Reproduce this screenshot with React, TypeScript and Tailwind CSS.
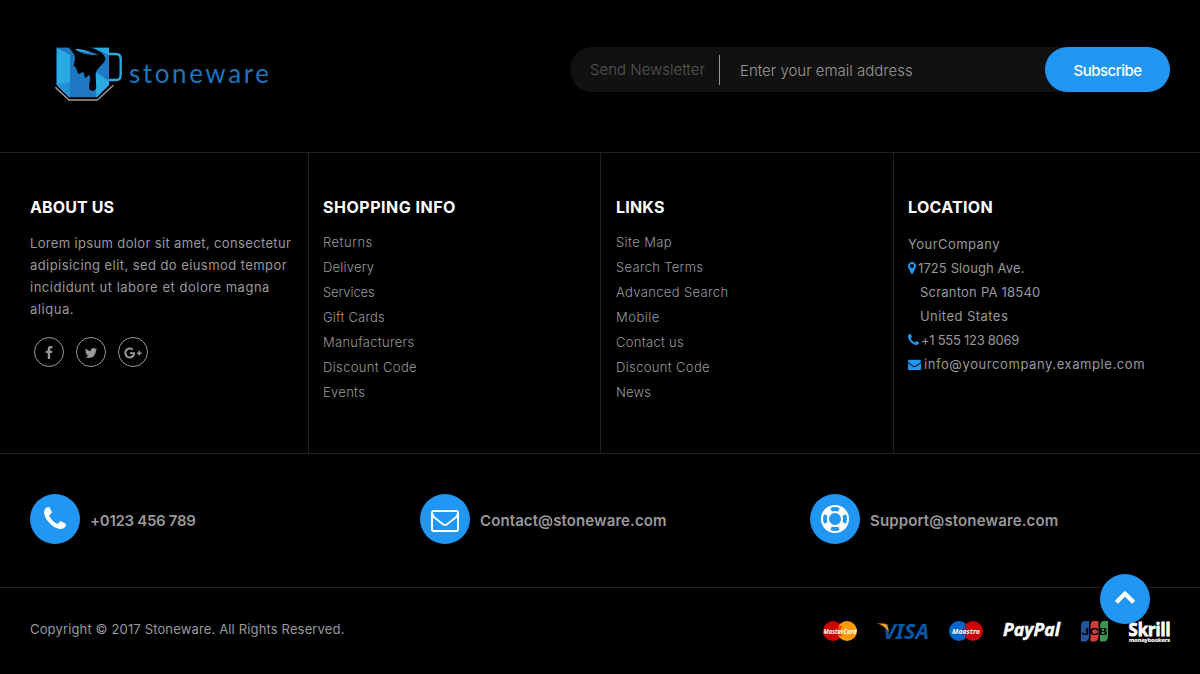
import React from "react";
import { FaGooglePlusG } from "react-icons/fa";

const PHONE =
  "M1600 1240q0 27-10 70.5t-21 68.5q-21 50-122 106-94 51-186 51-27 0-53-3.5t-57.5-12.5-47-14.5-55.5-20.5-49-18q-98-35-175-83-127-79-264-216t-216-264q-48-77-83-175-3-9-18-49t-20.5-55.5-14.5-47-12.5-57.5-3.5-53q0-92 51-186 56-101 106-122 25-11 68.5-21t70.5-10q14 0 21 3 18 6 53 76 11 19 30 54t35 63.5 31 53.5q3 4 17.5 25t21.5 35.5 7 28.5q0 20-28.5 50t-62 55-62 53-28.5 46q0 9 5 22.5t8.5 20.5 14 24 11.5 19q76 137 174 235t235 174q2 1 19 11.5t24 14 20.5 8.5 22.5 5q18 0 46-28.5t53-62 55-62 50-28.5q14 0 28.5 7t35.5 21.5 25 17.5q25 15 53.5 31t63.5 35 54 30q70 35 76 53 3 7 3 21z";
const ENVELOPE_O =
  "M1664 1504v-768q-32 36-69 66-268 206-426 338-51 43-83 67t-86.5 48.5-102.5 24.5h-2q-48 0-102.5-24.5t-86.5-48.5-83-67q-158-132-426-338-37-30-69-66v768q0 13 9.5 22.5t22.5 9.5h1472q13 0 22.5-9.5t9.5-22.5zm0-1051v-24.5l-.5-13-3-12.5-5.5-9-9-7.5-14-2.5h-1472q-13 0-22.5 9.5t-9.5 22.5q0 168 147 284 193 152 401 317 6 5 35 29.5t46 37.5 44.5 31.5 50.5 27.5 43 9h2q20 0 43-9t50.5-27.5 44.5-31.5 46-37.5 35-29.5q208-165 401-317 54-43 100.5-115.5t46.5-131.5zm128-37v1088q0 66-47 113t-113 47h-1472q-66 0-113-47t-47-113v-1088q0-66 47-113t113-47h1472q66 0 113 47t47 113z";
const ENVELOPE =
  "M1792 710v794q0 66-47 113t-113 47h-1472q-66 0-113-47t-47-113v-794q44 49 101 87 362 246 497 345 57 42 92.5 65.5t94.5 48 110 24.5h2q51 0 110-24.5t94.5-48 92.5-65.5q170-123 498-345 57-39 100-87zm0-294q0 79-49 151t-122 123q-376 261-468 325-10 7-42.5 31t-54 38.5-52 32.5-57.5 27-50 9h-2q-23 0-50-9t-57.5-27-52-32.5-54-38.5-42.5-31q-91-64-262-182.5t-205-142.5q-62-42-117-115.5t-55-136.5q0-78 41.5-130t118.5-52h1472q65 0 112.5 47t47.5 113z";
const MARKER =
  "M1152 640q0-106-75-181t-181-75-181 75-75 181 75 181 181 75 181-75 75-181zm256 0q0 109-33 179l-364 774q-16 33-47.5 52t-67.5 19-67.5-19-46.5-52l-365-774q-33-70-33-179 0-212 150-362t362-150 362 150 150 362z";
const FACEBOOK =
  "M1343 12v264h-157q-86 0-116 36t-30 108v189h293l-39 296h-254v759h-306v-759h-255v-296h255v-218q0-186 104-288.5t277-102.5q147 0 228 12z";
const TWITTER =
  "M1684 408q-67 98-162 167 1 14 1 42 0 130-38 259.5t-115.5 248.5-184.5 210.5-258 146-323 54.500q-271 0-496-145 35 4 78 4 225 0 401-138-105-2-188-64.500t-114-159.500q33 5 61 5 43 0 85-11-112-23-185.500-111.500t-73.500-205.500v-4q68 38 146 41-66-44-105-115t-39-154q0-88 44-163 121 149 294.500 238.500t371.500 99.500q-8-38-8-74 0-134 94.500-228.500t228.500-94.500q140 0 236 102 109-21 205-78-37 115-142 178 93-10 186-50z";
const CHEVRON_UP =
  "M1683 1331l-166 165q-19 19-45 19t-45-19l-531-531-531 531q-19 19-45 19t-45-19l-166-165q-19-19-19-45.500t19-45.500l742-741q19-19 45-19t45 19l742 741q19 19 19 45.500t-19 45.500z";

function Glyph({ d, className, viewBox = "0 0 1792 1792" }: { d: string; className: string; viewBox?: string }) {
  return (
    <svg viewBox={viewBox} className={className} fill="currentColor" aria-hidden="true">
      <path d={d} />
    </svg>
  );
}

function MugLogo() {
  return (
    <svg viewBox="45 30 204 171" className="h-[57px] w-[68px]" aria-hidden="true">
      <path d="M50 38H207V150L170 187H87L50 150Z" fill="#1f78c4" />
      <path d="M50 38L90 58V146L50 150Z" fill="#29abe2" />
      <path d="M50 150L90 140V187H87Z" fill="#2490d4" />
      <path d="M50 38H92L104 66Z" fill="#1f78c4" />
      <path d="M160 38H207V60Z" fill="#29abe2" />
      <path d="M207 138L168 112V187H170L207 150Z" fill="#29abe2" />
      <path
        d="M86 37C100 54 106 60 105 73C104 84 98 92 104 95C111 97 109 110 116 116C121 119 124 111 129 112C136 114 130 128 138 128C143 127 142 120 148 121C154 126 145 152 148 161C152 170 166 169 168 160C171 150 164 125 168 112C171 99 194 86 196 73C196 57 174 43 145 37Z"
        fill="#000"
      />
      <path d="M104 42C122 42 160 50 174 60C150 62 117 54 104 42Z" fill="#1f78c4" />
      <path d="M106 42C122 42 140 46 150 52C135 54 117 50 106 42Z" fill="#29abe2" />
      <path d="M207 57H228Q242 57 242 72V119Q242 135 227 135H207" fill="none" stroke="#29abe2" strokeWidth="7" />
      <path d="M46 157L87 195H172L220 151" fill="none" stroke="#a39f9a" strokeWidth="4" />
    </svg>
  );
}

function LifeRing() {
  return (
    <svg viewBox="0 0 28 28" className="size-7" aria-hidden="true">
      <circle cx="14" cy="14" r="10" fill="none" stroke="#fff" strokeWidth="8" />
      <circle
        cx="14"
        cy="14"
        r="10"
        fill="none"
        stroke="#2196f3"
        strokeWidth="3.8"
        pathLength="360"
        strokeDasharray="46 44"
        strokeDashoffset="23"
      />
    </svg>
  );
}

function Social({ children }: { children: React.ReactNode }) {
  return (
    <a className="flex size-[30px] items-center justify-center rounded-full border border-[#999] pt-[2px] text-[#999]">
      {children}
    </a>
  );
}

function Heading({ children, className }: { children: React.ReactNode; className: string }) {
  return <h3 className={`text-base leading-6 font-bold whitespace-nowrap text-white ${className}`}>{children}</h3>;
}

function LinkColumn({
  title,
  className,
  track,
  items,
}: {
  title: string;
  className: string;
  track: string;
  items: [string, string][];
}) {
  return (
    <div className={`border-r border-[#222] pt-[42px] ${className}`}>
      <Heading className={track}>{title}</Heading>
      <ul className="mt-[11px] text-[13px] leading-[25px] font-light">
        {items.map(([label, tracking]) => (
          <li key={label} className={tracking}>
            {label}
          </li>
        ))}
      </ul>
    </div>
  );
}

function Contact({ icon, label, track }: { icon: React.ReactNode; label: string; track: string }) {
  return (
    <div className="flex w-[390px] items-center gap-[10px]">
      <div className="flex size-[50px] items-center justify-center rounded-full bg-[#2196f3] text-white">{icon}</div>
      <span className={`pt-[5px] text-[15px] font-semibold whitespace-nowrap ${track}`}>{label}</span>
    </div>
  );
}

function Payments() {
  return (
    <svg viewBox="822 610 352 40" className="h-10 w-[352px]" aria-hidden="true">
      <g fontFamily="'Noto Sans', sans-serif" fontStyle="italic" fontWeight="700">
        <circle cx="833" cy="631" r="10" fill="#cc0000" />
        <circle cx="847" cy="631" r="10" fill="#ff9900" />
        <path d="M837 627h5M836 629h5M836 631h5M836 633h5M837 635h5" stroke="#cc0000" strokeWidth="1" />
        <text x="823.5" y="633.5" fontSize="6.8" fill="#fff" textLength="33" lengthAdjust="spacingAndGlyphs">MasterCard</text>
        <text x="883" y="639" fontSize="21.5" fill="#0a57a4" textLength="46" lengthAdjust="spacingAndGlyphs">VISA</text>
        <path d="M877 623.5H884Q887 624 888 628L889 632Q884 625 877 623.5Z" fill="#f9a51a" />
        <circle cx="959" cy="631" r="10" fill="#0066cb" />
        <circle cx="973" cy="631" r="10" fill="#cc0000" />
        <path d="M963 627h5M962 629h5M962 631h5M962 633h5M963 635h5" stroke="#0066cb" strokeWidth="1" />
        <text x="952" y="634" fontSize="7.5" fill="#fff" textLength="28" lengthAdjust="spacingAndGlyphs">Maestro</text>
        <text x="1003" y="636" fontSize="17" fill="#fff" stroke="#fff" strokeWidth="0.4" textLength="57" lengthAdjust="spacingAndGlyphs">PayPal</text>
        <circle cx="1062.5" cy="624" r="0.6" fill="#777" />
      </g>
      <path d="M1085 621H1089V636Q1089 641.5 1084 641.5H1081V626Q1081 621 1085 621Z" fill="#24569f" />
      <path d="M1094 621H1098.5V636Q1098.5 641.5 1094 641.5H1090.5V626Q1090.5 621 1094 621Z" fill="#cf3d36" />
      <path d="M1104 621H1108V636Q1108 641.5 1104 641.5H1100V626Q1100 621 1104 621Z" fill="#3d954b" />
      <text x="1081.5" y="634.5" fontFamily="Inter, sans-serif" fontSize="8.5" fontWeight="700" fill="#000" textLength="26" lengthAdjust="spacingAndGlyphs">JCB</text>
      <g fontFamily="'Noto Sans', sans-serif" fontWeight="700" fill="#fff" stroke="#fff">
        <text x="1128.5" y="635.5" fontSize="18" strokeWidth="0.8" textLength="42" lengthAdjust="spacingAndGlyphs">Skrill</text>
        <text x="1129" y="641.5" fontSize="6" strokeWidth="0.2" textLength="41" lengthAdjust="spacingAndGlyphs">moneybookers</text>
      </g>
    </svg>
  );
}

const SHOPPING: [string, string][] = [
  ["Returns", "tracking-[0.5px]"],
  ["Delivery", "tracking-[0.2px]"],
  ["Services", "tracking-[-0.1px]"],
  ["Gift Cards", "tracking-[0.2px]"],
  ["Manufacturers", "tracking-[0.28px]"],
  ["Discount Code", "tracking-[0.35px]"],
  ["Events", "tracking-[0.3px]"],
];

const LINKS: [string, string][] = [
  ["Site Map", "tracking-[0.4px]"],
  ["Search Terms", "tracking-[0.3px]"],
  ["Advanced Search", "tracking-[0.35px]"],
  ["Mobile", "tracking-[0.5px]"],
  ["Contact us", "tracking-[0.3px]"],
  ["Discount Code", "tracking-[0.35px]"],
  ["News", "tracking-[0.2px]"],
];

export default function App() {
  return (
    <footer className="h-[674px] w-[1200px] overflow-hidden bg-black font-['Inter',sans-serif] text-[#999]">
      <div className="flex h-[153px] items-start justify-between border-b border-[#222] pr-[30px] pl-[55px]">
        <div className="flex pt-[45px]">
          <MugLogo />
          <span className="pt-3 pl-[6px] font-['Lato',sans-serif] text-[26px] leading-8 font-normal tracking-[2.6px] text-[#1c75bc]">
            stoneware
          </span>
        </div>
        <form className="mt-[47px] flex h-[45px] w-[600px] items-center rounded-full bg-[#111] pl-[20px]">
          <span className="w-[129px] pt-px text-[15px] font-light whitespace-nowrap text-[#555]">
            Send Newsletter
          </span>
          <span className="h-[30px] w-px bg-[#999]" />
          <span className="flex-1 pt-[3px] pl-5 text-[15px] font-light whitespace-nowrap">
            Enter your email address
          </span>
          <button
            type="button"
            className="h-[45px] w-[125px] rounded-full bg-[#2196f3] pt-[4px] text-[15px] font-medium tracking-[-0.5px] text-white"
          >
            Subscribe
          </button>
        </form>
      </div>

      <div className="grid h-[301px] grid-cols-[309px_292px_293px_306px] border-b border-[#222]">
        <div className="border-r border-[#222] pt-[42px] pl-[30px]">
          <Heading className="tracking-[0.1px]">ABOUT US</Heading>
          <p className="mt-[13px] text-[13px] leading-[22px] whitespace-nowrap">
            <span className="block tracking-[0.35px]">Lorem ipsum dolor sit amet, consectetur</span>
            <span className="block tracking-[0.43px]">adipisicing elit, sed do eiusmod tempor</span>
            <span className="block tracking-[0.52px]">incididunt ut labore et dolore magna</span>
            <span className="block tracking-[0.55px]">aliqua.</span>
          </p>
          <div className="mt-[17px] flex gap-3 pl-1">
            <Social>
              <Glyph d={FACEBOOK} className="size-[14px]" />
            </Social>
            <Social>
              <Glyph d={TWITTER} className="size-[14px]" />
            </Social>
            <Social>
              <FaGooglePlusG className="size-[18px]" />
            </Social>
          </div>
        </div>
        <LinkColumn title="SHOPPING INFO" className="pl-[14px]" track="tracking-[0.5px]" items={SHOPPING} />
        <LinkColumn title="LINKS" className="pl-[15px]" track="tracking-[0.2px]" items={LINKS} />
        <div className="pt-[42px] pl-[14px]">
          <Heading className="tracking-[0.3px]">LOCATION</Heading>
          <address className="mt-[13px] text-[13px] leading-6 whitespace-nowrap not-italic">
            <div className="tracking-[0.45px]">YourCompany</div>
            <div className="flex items-center gap-[2px]">
              <Glyph d={MARKER} viewBox="384 0 1024 1792" className="h-[14px] w-2 text-[#2196f3]" />
              <span className="tracking-[0.1px]">1725 Slough Ave.</span>
            </div>
            <div className="pl-3 tracking-[0.22px]">Scranton PA 18540</div>
            <div className="pl-3 tracking-[0.45px]">United States</div>
            <div className="flex items-center gap-[2px]">
              <Glyph d={PHONE} viewBox="192 0 1408 1792" className="h-[14px] w-[11px] text-[#2196f3]" />
              <span className="tracking-[-0.27px]">+1 555 123 8069</span>
            </div>
            <div className="flex items-center gap-[3px]">
              <Glyph d={ENVELOPE} className="size-[13px] text-[#2196f3]" />
              <span className="tracking-[0.58px]">info@yourcompany.example.com</span>
            </div>
          </address>
        </div>
      </div>

      <div className="flex h-[134px] items-start border-b border-[#222] pt-10 pl-[30px]">
        <Contact icon={<Glyph d={PHONE} className="size-7" />} label="+0123 456 789" track="tracking-[-0.3px]" />
        <Contact
          icon={<Glyph d={ENVELOPE_O} className="mt-px size-7" />}
          label="Contact@stoneware.com"
          track="tracking-[0.1px]"
        />
        <Contact icon={<LifeRing />} label="Support@stoneware.com" track="tracking-[0.14px]" />
      </div>

      <div className="relative flex h-[86px] items-start justify-between pr-[26px] pl-[30px]">
        <span className="pt-[31px] text-[13px] leading-5 tracking-[0.15px] whitespace-nowrap">
          Copyright © 2017 Stoneware. All Rights Reserved.
        </span>
        <div className="pt-[22px]">
          <Payments />
        </div>
        <button
          type="button"
          aria-label="Back to top"
          className="absolute -top-[14px] right-[50px] flex size-[50px] items-center justify-center rounded-full bg-[#2196f3] text-white"
        >
          <Glyph d={CHEVRON_UP} className="mb-[6px] size-[22px]" />
        </button>
      </div>
    </footer>
  );
}
